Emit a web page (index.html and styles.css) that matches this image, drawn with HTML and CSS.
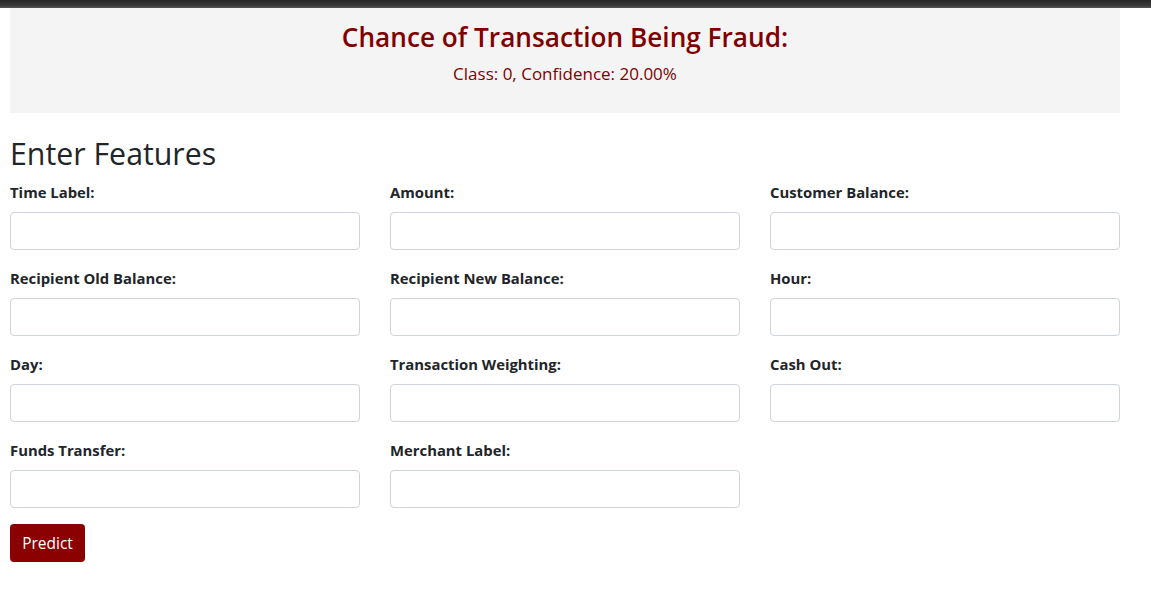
FILE: index.html
```html
<!DOCTYPE html>
<html>
<head>
<meta charset="utf-8">
<link rel="stylesheet" href="styles.css">
</head>
<body>
<div class="topbar"></div>
<main class="page">
  <section class="result">
    <h2 class="result-title">Chance of Transaction Being Fraud:</h2>
    <p class="result-text">Class: 0, Confidence: 20.00%</p>
  </section>
  <h1 class="section-title">Enter Features</h1>
  <form class="features">
    <div class="grid">
      <div class="field"><label>Time Label:</label><input type="text"></div>
      <div class="field"><label>Amount:</label><input type="text"></div>
      <div class="field"><label>Customer Balance:</label><input type="text"></div>
      <div class="field"><label>Recipient Old Balance:</label><input type="text"></div>
      <div class="field"><label>Recipient New Balance:</label><input type="text"></div>
      <div class="field"><label>Hour:</label><input type="text"></div>
      <div class="field"><label>Day:</label><input type="text"></div>
      <div class="field"><label>Transaction Weighting:</label><input type="text"></div>
      <div class="field"><label>Cash Out:</label><input type="text"></div>
      <div class="field"><label>Funds Transfer:</label><input type="text"></div>
      <div class="field"><label>Merchant Label:</label><input type="text"></div>
    </div>
    <button type="button" class="btn">Predict</button>
  </form>
</main>
</body>
</html>
```
FILE: styles.css
```css
* { box-sizing: border-box; }
html, body { margin: 0; padding: 0; background: #fff; }
body { font-family: "Open Sans", "Noto Sans", sans-serif; color: #212529; }
.topbar { height: 8px; background: linear-gradient(#262626, #3a3a3a 70%, #555); }
.page { width: 1110px; margin-left: 10px; }
.result { background: #f4f4f4; height: 105px; text-align: center; padding-top: 12px; }
.result-title { margin: 0; font-size: 26.2px; font-weight: 600; color: #800000; line-height: 34px; }
.result-text { margin: 9px 0 0; font-size: 17px; color: #800000; line-height: 22px; }
.section-title { margin: 22px 0 0; font-size: 30.3px; font-weight: 500; line-height: 38px; color: #212529; }
.grid { display: grid; grid-template-columns: repeat(3, 350px); column-gap: 30px; row-gap: 18px; margin-top: 9px; }
.field { display: flex; flex-direction: column; }
.field label { font-size: 14.85px; font-weight: 700; line-height: 20px; margin-bottom: 10px; }
.field input { height: 38px; border: 1px solid #ced4da; border-radius: 4px; padding: 6px 12px; font: inherit; }
.btn { margin-top: 16px; background: #8b0000; color: #fff; border: none; border-radius: 4px; height: 38px; width: 75px; font-family: inherit; font-size: 15.5px; padding: 0; }
```
